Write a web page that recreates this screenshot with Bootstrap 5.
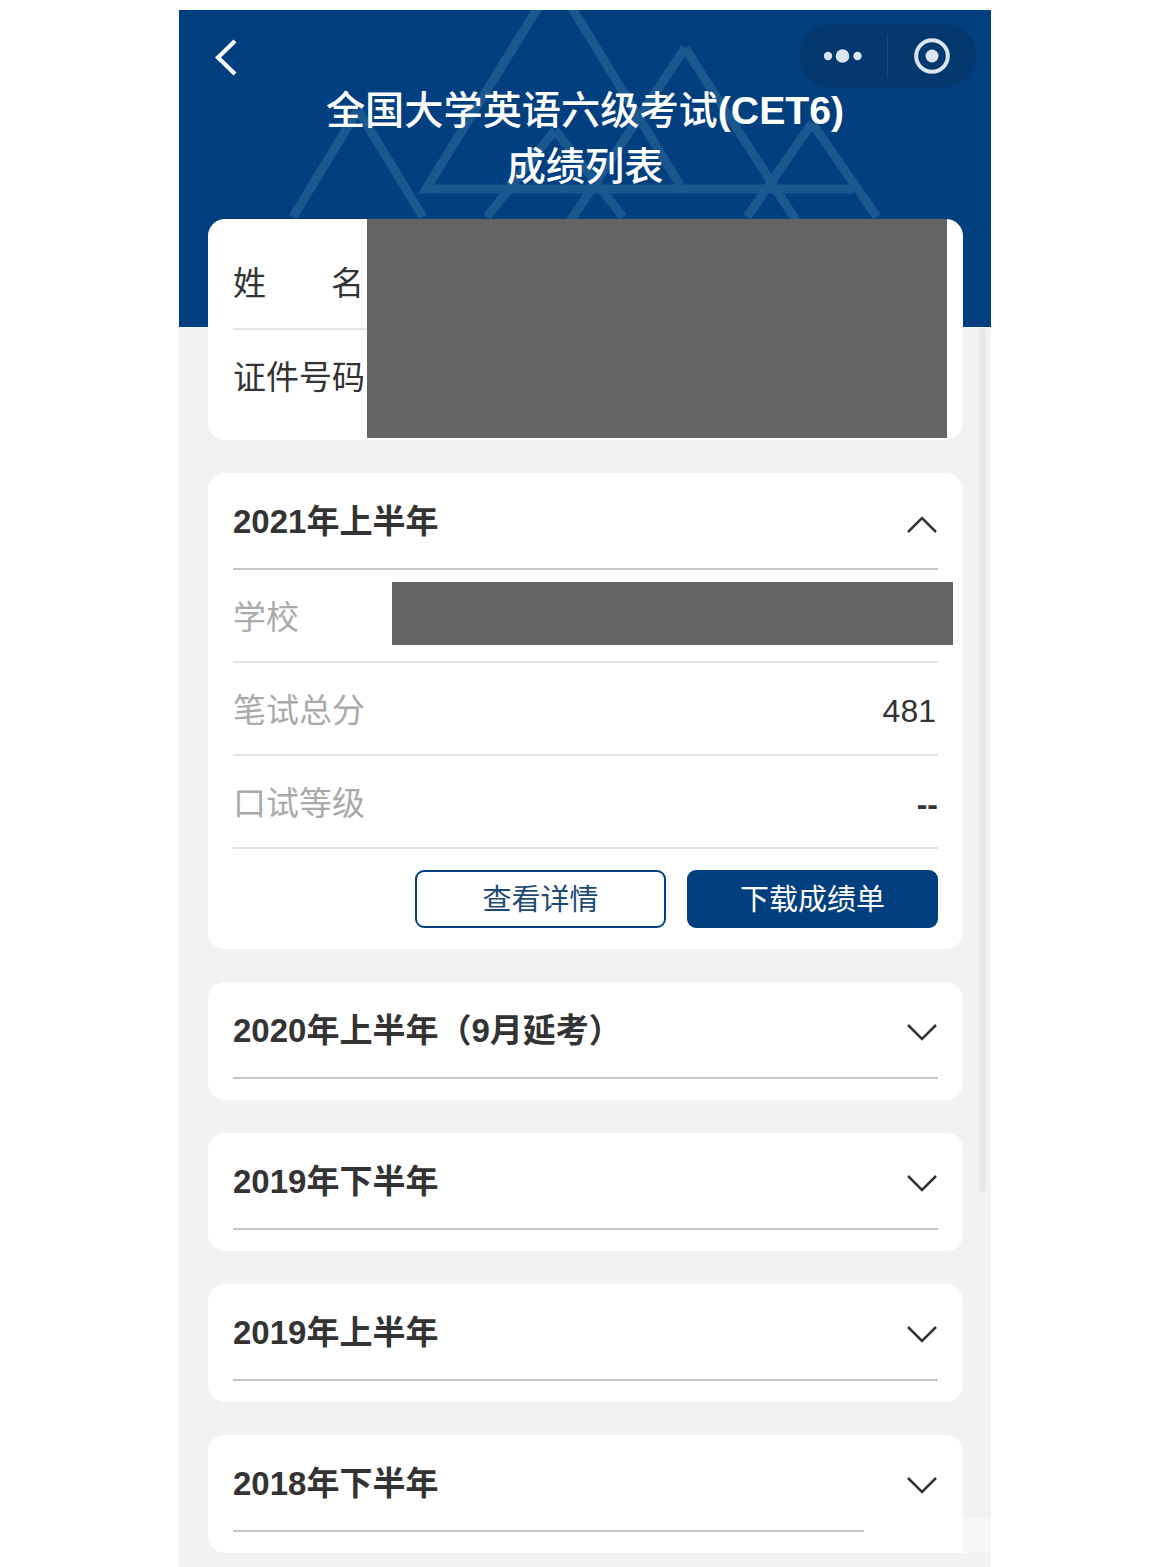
<!DOCTYPE html>
<html lang="zh-CN">

<head>
    <meta charset="UTF-8">
    <meta name="viewport" content="width=device-width, initial-scale=1.0">
    <title>成绩列表</title>
    <link href="https://cdn.jsdelivr.net/npm/bootstrap@5.3.0/dist/css/bootstrap.min.css" rel="stylesheet">
    <style>
        body {
            font-family: "Liberation Sans", "Noto Sans CJK SC", sans-serif;
            background-color: #fff;
            color: #333;
            margin: 0;
            height: 1567px;
            overflow: hidden;
        }

        .phone {
            width: 812px;
            margin: 10px 0 0 179px;
            height: 1557px;
            background-color: #f2f2f2;
            position: relative;
            overflow: hidden;
        }

        .head-bg {
            background-color: #023f7e;
            height: 317px;
            position: absolute;
            top: 0;
            left: 0;
            right: 0;
        }

        .head-bg svg {
            position: absolute;
            top: 0;
            left: 0;
        }

        .capsule {
            position: absolute;
            top: 13px;
            left: 620px;
            width: 177px;
            height: 65px;
            border-radius: 33px;
            background-color: #03396f;
        }

        .capsule .sep {
            width: 1px;
            height: 44px;
            background-color: #124c85;
        }

        .back-btn {
            position: absolute;
            top: 28px;
            left: 34px;
        }

        .page-title {
            position: relative;
            color: #fff;
            font-size: 39.2px;
            font-weight: 500;
            line-height: 56px;
            text-align: center;
            padding-top: 73px;
            height: 209px;
            margin: 0;
        }

        .title-latin {
            font-weight: 700;
        }

        .cards-wrap {
            position: relative;
            padding: 0 28px 0 29px;
            display: flex;
            flex-direction: column;
            gap: 33px;
        }

        .score-card {
            background-color: #fff;
            border-radius: 17px;
            padding: 0 25px;
            position: relative;
            flex-shrink: 0;
        }

        .info-row {
            height: 93px;
            display: flex;
            align-items: center;
            justify-content: space-between;
            font-size: 33px;
            padding-top: 5px;
            border-bottom: 2px solid #e3e3e3;
        }

        .info-first {
            height: 111px;
            padding-top: 21px;
        }

        .info-last {
            height: 110px;
            border-bottom: 0;
            padding-top: 0;
            padding-bottom: 14px;
        }

        .name-label {
            width: 131px;
            display: flex;
            justify-content: space-between;
        }

        .term-head {
            height: 97px;
            display: flex;
            align-items: center;
            justify-content: space-between;
            font-size: 33px;
            font-weight: 700;
            color: #333;
            border-bottom: 2px solid #c6c6c6;
            padding-top: 2px;
        }

        .term-head svg {
            margin-top: 4px;
        }

        .term-closed {
            height: 118px;
        }

        .row-label {
            color: #aaa;
        }

        .row-val {
            color: #333;
            font-size: 32px;
            padding-right: 2px;
        }

        .row-dash {
            font-weight: 700;
            padding-right: 0;
        }

        .btn-line {
            display: flex;
            justify-content: flex-end;
            gap: 21px;
            padding: 21px 0;
        }

        .btn-score {
            width: 251px;
            height: 58px;
            font-size: 29px;
            line-height: 1;
            border-radius: 9px;
            border: 2px solid #023f7e;
            padding: 2px 0 0;
        }

        .btn-detail {
            background-color: #fff;
            color: #1d4a76;
        }

        .btn-download {
            background-color: #023f7e;
            color: #fff;
        }

        .redact {
            position: absolute;
            background-color: #666364;
        }

        .redact-info {
            left: 159px;
            top: 0;
            width: 580px;
            height: 219px;
        }

        .redact-school {
            left: 184px;
            top: 109px;
            width: 561px;
            height: 63px;
        }

        .scroll-thumb {
            position: absolute;
            left: 800px;
            top: 318px;
            width: 7px;
            height: 865px;
            background-color: #e7e7e7;
            border-radius: 4px;
        }

        /* faded patch over the bottom right corner */
        .wm-patch {
            position: absolute;
            left: 685px;
            top: 1508px;
            width: 127px;
            height: 35px;
            background: linear-gradient(to right, #fff 99px, rgba(255, 255, 255, .4) 99px);
        }
    </style>
</head>

<body>
    <div class="phone">
        <div class="head-bg">
            <!-- background triangles -->
            <svg width="812" height="317" fill="none" stroke="#1b5890" stroke-width="9">
                <path d="M179 100 L114 207 M179 100 L244 207" />
                <path d="M376 -30 L247 179 H674 M376 -30 L501 175" />
                <path d="M506 38 L372 240 M506 38 L636 240" />
                <path d="M633 113 L568 207 M633 113 L698 207" />
                <path d="M376 120 L308 207 M376 120 L444 207" />
            </svg>
        </div>
        <div class="scroll-thumb"></div>

        <svg class="back-btn" width="30" height="40" viewBox="0 0 30 40" fill="none" stroke="#fff"
            stroke-width="4.2">
            <path d="M22 3 L5 19.5 L22 36" />
        </svg>

        <div class="capsule d-flex align-items-center">
            <div class="d-flex align-items-center justify-content-center" style="width:88px">
                <svg width="42" height="16" viewBox="0 0 42 16" fill="#dce4ee">
                    <circle cx="6" cy="8" r="4.2" />
                    <circle cx="20.5" cy="8" r="6.8" />
                    <circle cx="35.5" cy="8" r="4.2" />
                </svg>
            </div>
            <div class="sep"></div>
            <div class="flex-grow-1 d-flex justify-content-center">
                <svg width="38" height="38" viewBox="0 0 38 38">
                    <circle cx="19" cy="19" r="15.8" fill="none" stroke="#dce4ee" stroke-width="4" />
                    <circle cx="19" cy="19" r="6.5" fill="#dce4ee" />
                </svg>
            </div>
        </div>

        <h1 class="page-title">全国大学英语六级考试<span class="title-latin">(CET6)</span><br>成绩列表</h1>

        <div class="cards-wrap">
            <div class="score-card">
                <div class="info-row info-first"><span class="name-label"><span>姓</span><span>名</span></span></div>
                <div class="info-row info-last"><span>证件号码</span></div>
                <div class="redact redact-info"></div>
            </div>

            <div class="score-card">
                <div class="term-head"><span>2021年上半年</span>
                    <svg width="32" height="20" viewBox="0 0 32 20" fill="none" stroke="#333" stroke-width="2.5">
                        <path d="M2 18 L16 4 L30 18" />
                    </svg>
                </div>
                <div class="info-row"><span class="row-label">学校</span></div>
                <div class="info-row"><span class="row-label">笔试总分</span><span class="row-val">481</span></div>
                <div class="info-row"><span class="row-label">口试等级</span><span class="row-val row-dash">--</span></div>
                <div class="btn-line">
                    <button type="button" class="btn btn-score btn-detail">查看详情</button>
                    <button type="button" class="btn btn-score btn-download">下载成绩单</button>
                </div>
                <div class="redact redact-school"></div>
            </div>

            <div class="score-card term-closed">
                <div class="term-head"><span>2020年上半年（9月延考）</span>
                    <svg width="32" height="20" viewBox="0 0 32 20" fill="none" stroke="#333" stroke-width="2.5">
                        <path d="M2 2 L16 16 L30 2" />
                    </svg>
                </div>
            </div>
            <div class="score-card term-closed">
                <div class="term-head"><span>2019年下半年</span>
                    <svg width="32" height="20" viewBox="0 0 32 20" fill="none" stroke="#333" stroke-width="2.5">
                        <path d="M2 2 L16 16 L30 2" />
                    </svg>
                </div>
            </div>
            <div class="score-card term-closed">
                <div class="term-head"><span>2019年上半年</span>
                    <svg width="32" height="20" viewBox="0 0 32 20" fill="none" stroke="#333" stroke-width="2.5">
                        <path d="M2 2 L16 16 L30 2" />
                    </svg>
                </div>
            </div>
            <div class="score-card term-closed">
                <div class="term-head"><span>2018年下半年</span>
                    <svg width="32" height="20" viewBox="0 0 32 20" fill="none" stroke="#333" stroke-width="2.5">
                        <path d="M2 2 L16 16 L30 2" />
                    </svg>
                </div>
            </div>
        </div>
        <div class="wm-patch"></div>
    </div>

    <script src="https://cdn.jsdelivr.net/npm/bootstrap@5.3.0/dist/js/bootstrap.bundle.min.js"></script>
</body>

</html>
